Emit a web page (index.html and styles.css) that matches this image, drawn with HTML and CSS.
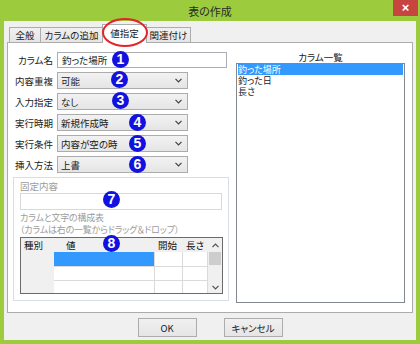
FILE: index.html
```html
<!DOCTYPE html>
<html lang="ja">
<head>
    <meta charset="UTF-8">
    <meta name="viewport" content="width=device-width, initial-scale=1.0">
    <title>表の作成</title>
    <link rel="stylesheet" href="styles.css">
</head>
<body>
    <div class="window">
        <div class="titlebar">
            <span class="title">表の作成</span>
            <span class="close">×</span>
        </div>
        <div class="client">
            <div class="tabs">
                <span class="tab t1">全般</span>
                <span class="tab t2">カラムの追加</span>
                <span class="tab t3 active">値指定</span>
                <span class="tab t4">関連付け</span>
            </div>
            <div class="pane">
                <div class="left">
                    <div class="row">
                        <label>カラム名</label>
                        <div class="textbox">釣った場所</div>
                    </div>
                    <div class="row">
                        <label>内容重複</label>
                        <div class="combo"><span>可能</span><svg width="7" height="5" viewBox="0 0 7 5"><polyline points="0.5,0.8 3.5,3.8 6.5,0.8" fill="none" stroke="#404040" stroke-width="1.2"/></svg></div>
                    </div>
                    <div class="row">
                        <label>入力指定</label>
                        <div class="combo"><span>なし</span><svg width="7" height="5" viewBox="0 0 7 5"><polyline points="0.5,0.8 3.5,3.8 6.5,0.8" fill="none" stroke="#404040" stroke-width="1.2"/></svg></div>
                    </div>
                    <div class="row">
                        <label>実行時期</label>
                        <div class="combo"><span>新規作成時</span><svg width="7" height="5" viewBox="0 0 7 5"><polyline points="0.5,0.8 3.5,3.8 6.5,0.8" fill="none" stroke="#404040" stroke-width="1.2"/></svg></div>
                    </div>
                    <div class="row">
                        <label>実行条件</label>
                        <div class="combo"><span>内容が空の時</span><svg width="7" height="5" viewBox="0 0 7 5"><polyline points="0.5,0.8 3.5,3.8 6.5,0.8" fill="none" stroke="#404040" stroke-width="1.2"/></svg></div>
                    </div>
                    <div class="row">
                        <label>挿入方法</label>
                        <div class="combo"><span>上書</span><svg width="7" height="5" viewBox="0 0 7 5"><polyline points="0.5,0.8 3.5,3.8 6.5,0.8" fill="none" stroke="#404040" stroke-width="1.2"/></svg></div>
                    </div>

                    <div class="group">
                        <div class="dim">固定内容</div>
                        <div class="textbox disabled"></div>
                        <div class="dim note">カラムと文字の構成表<br>（カラムは右の一覧からドラッグ＆ドロップ）</div>
                        <div class="grid">
                            <div class="hd">種別</div>
                            <div class="hd val">値</div>
                            <div class="hd">開始</div>
                            <div class="hd">長さ</div>
                            <div class="scroll">
                                <svg width="7" height="5" viewBox="0 0 7 5"><polyline points="0.5,4.2 3.5,1.2 6.5,4.2" fill="none" stroke="#505050" stroke-width="1.2"/></svg>
                                <div class="thumb"></div>
                                <div class="spacer"></div>
                                <svg width="7" height="5" viewBox="0 0 7 5"><polyline points="0.5,0.8 3.5,3.8 6.5,0.8" fill="none" stroke="#505050" stroke-width="1.2"/></svg>
                            </div>
                            <div class="rh"></div>
                            <div class="cell sel"></div>
                            <div class="cell"></div>
                            <div class="cell"></div>
                            <div class="cell"></div>
                            <div class="cell"></div>
                            <div class="cell"></div>
                            <div class="cell last"></div>
                            <div class="cell last"></div>
                            <div class="cell last"></div>
                        </div>
                    </div>
                </div>

                <div class="right">
                    <div class="caption">カラム一覧</div>
                    <div class="listbox">
                        <div class="item selected">釣った場所</div>
                        <div class="item">釣った日</div>
                        <div class="item">長さ</div>
                    </div>
                </div>
            </div>
            <div class="buttons">
                <button type="button">OK</button>
                <button type="button">キャンセル</button>
            </div>
        </div>

        <!-- annotations -->
        <span class="ring"></span>
        <span class="badge b1">1</span>
        <span class="badge b2">2</span>
        <span class="badge b3">3</span>
        <span class="badge b4">4</span>
        <span class="badge b5">5</span>
        <span class="badge b6">6</span>
        <span class="badge b7">7</span>
        <span class="badge b8">8</span>
    </div>
</body>
</html>
```

FILE: styles.css
```css
* {
    box-sizing: border-box;
}
body {
    margin: 0;
    font-family: "Noto Sans CJK JP", "Noto Sans", sans-serif;
    font-size: 9.5px;
    font-feature-settings: "palt";
    color: #1a1a1a;
}
.window {
    position: relative;
    width: 420px;
    height: 344px;
    background-color: #9ccb3e;
    padding: 0 4px 4px 4px;
}
.titlebar {
    height: 21px;
    text-align: center;
    font-size: 11px;
    line-height: 22px;
    color: #2a2a2a;
}
.close {
    position: absolute;
    top: 0;
    right: 2px;
    width: 25px;
    height: 16px;
    background-color: #c7453f;
    color: #fff;
    font-family: "Liberation Sans", sans-serif;
    font-size: 13px;
    line-height: 15px;
    font-weight: bold;
}
.client {
    height: 319px;
    background-color: #f0f0f0;
    padding: 0 3px;
}

/* tabs */
.tabs {
    display: flex;
    align-items: flex-end;
    height: 21px;
    padding-left: 2px;
}
.tab {
    height: 15px;
    border: 1px solid #acacac;
    border-bottom: none;
    background: linear-gradient(#f0f0f0, #e5e5e5);
    text-align: center;
    line-height: 14px;
}
.t1 { width: 32px; }
.t2 { width: 63px; margin-left: -1px; }
.t3 { width: 45px; margin-left: -1px; }
.t4 { width: 45px; margin-left: -1px; }
.tab.active {
    height: 19px;
    background: #fff;
    margin-bottom: -1px;
    line-height: 17px;
    position: relative;
    z-index: 1;
}
.pane {
    height: 271px;
    background-color: #fff;
    border: 1px solid #acacac;
    padding: 9px 7px 0 5px;
    display: grid;
    grid-template-columns: 216px 169px;
    column-gap: 7px;
}

/* left form */
.row {
    display: flex;
    align-items: center;
    gap: 4px;
    margin-bottom: 4px;
}
.row label {
    width: 40px;
    text-align: right;
}
.textbox {
    width: 170px;
    height: 16px;
    border: 1px solid #abadb3;
    background: #fff;
    padding-left: 4px;
    line-height: 14px;
}
.combo {
    width: 131px;
    height: 17px;
    border: 1px solid #acacac;
    background: linear-gradient(#f2f2f2, #e5e5e5);
    display: flex;
    align-items: center;
    justify-content: space-between;
    padding: 0 5px 0 3px;
}
.group {
    margin-top: 2px;
    height: 124px;
    border: 1px solid #d5dfe5;
    padding: 2px 5px 0 6px;
}
.dim {
    color: #9c9c9c;
    line-height: 12px;
}
.textbox.disabled {
    width: 202px;
    height: 17px;
    margin-top: 1px;
    border-color: #d9d9d9;
}
.note {
    margin-top: 2px;
    font-size: 9px;
    line-height: 11.5px;
    letter-spacing: -0.2px;
}

/* data grid */
.grid {
    margin-top: 2px;
    width: 203px;
    height: 57px;
    border: 1px solid #6b6b6b;
    display: grid;
    grid-template-columns: 33px 101px 28px 25px 14px;
    grid-template-rows: 14px 15px 14px 12px;
    background-color: #fff;
}
.hd {
    background-color: #f0f0f0;
    padding-left: 3px;
    line-height: 14px;
    color: #111;
}
.hd.val {
    padding-left: 12px;
}
.scroll {
    grid-row: 1 / 5;
    grid-column: 5;
    background-color: #f0f0f0;
    display: flex;
    flex-direction: column;
    align-items: center;
    padding: 5px 0 3px;
}
.thumb {
    width: 12px;
    height: 13px;
    margin-top: 4px;
    background-color: #cdcdcd;
}
.spacer {
    flex: 1;
}
.rh {
    grid-row: 2 / 5;
    grid-column: 1;
    background-color: #f0f0f0;
}
.cell {
    border-right: 1px solid #dadada;
    border-bottom: 1px solid #dadada;
}
.cell.last {
    border-bottom: none;
}
.cell.sel {
    background-color: #3399ff;
}

/* right list */
.caption {
    text-align: center;
    line-height: 11px;
    color: #1a1a1a;
}
.listbox {
    height: 240px;
    border: 1px solid #828790;
    padding: 0 1px;
}
.item {
    font-size: 9px;
    line-height: 11px;
    height: 11px;
}
.item.selected {
    background-color: #3399ff;
    color: #fff;
}

/* buttons */
.buttons {
    display: flex;
    justify-content: center;
    gap: 27px;
    margin-top: 5px;
}
button {
    width: 59px;
    height: 19px;
    border: 1px solid #acacac;
    background: linear-gradient(#f0f0f0, #e5e5e5);
    font-family: inherit;
    font-size: 9.5px;
    font-feature-settings: "palt";
    color: #1a1a1a;
    padding: 0;
}

/* annotation marks */
.ring {
    position: absolute;
    left: 102px;
    top: 18px;
    width: 46px;
    height: 29px;
    border: 2px solid #e0262a;
    border-radius: 50%;
    z-index: 2;
}
.badge {
    position: absolute;
    width: 17px;
    height: 17px;
    border-radius: 50%;
    background-color: #1212e0;
    color: #fff;
    font-family: "Liberation Sans", sans-serif;
    font-weight: bold;
    font-size: 14px;
    line-height: 17px;
    text-align: center;
}
.b1 { left: 112px; top: 51px; }
.b2 { left: 111px; top: 71px; }
.b3 { left: 112px; top: 92px; }
.b4 { left: 129px; top: 114px; }
.b5 { left: 129px; top: 135px; }
.b6 { left: 129px; top: 156px; }
.b7 { left: 103px; top: 191px; }
.b8 { left: 103px; top: 235px; }
```
